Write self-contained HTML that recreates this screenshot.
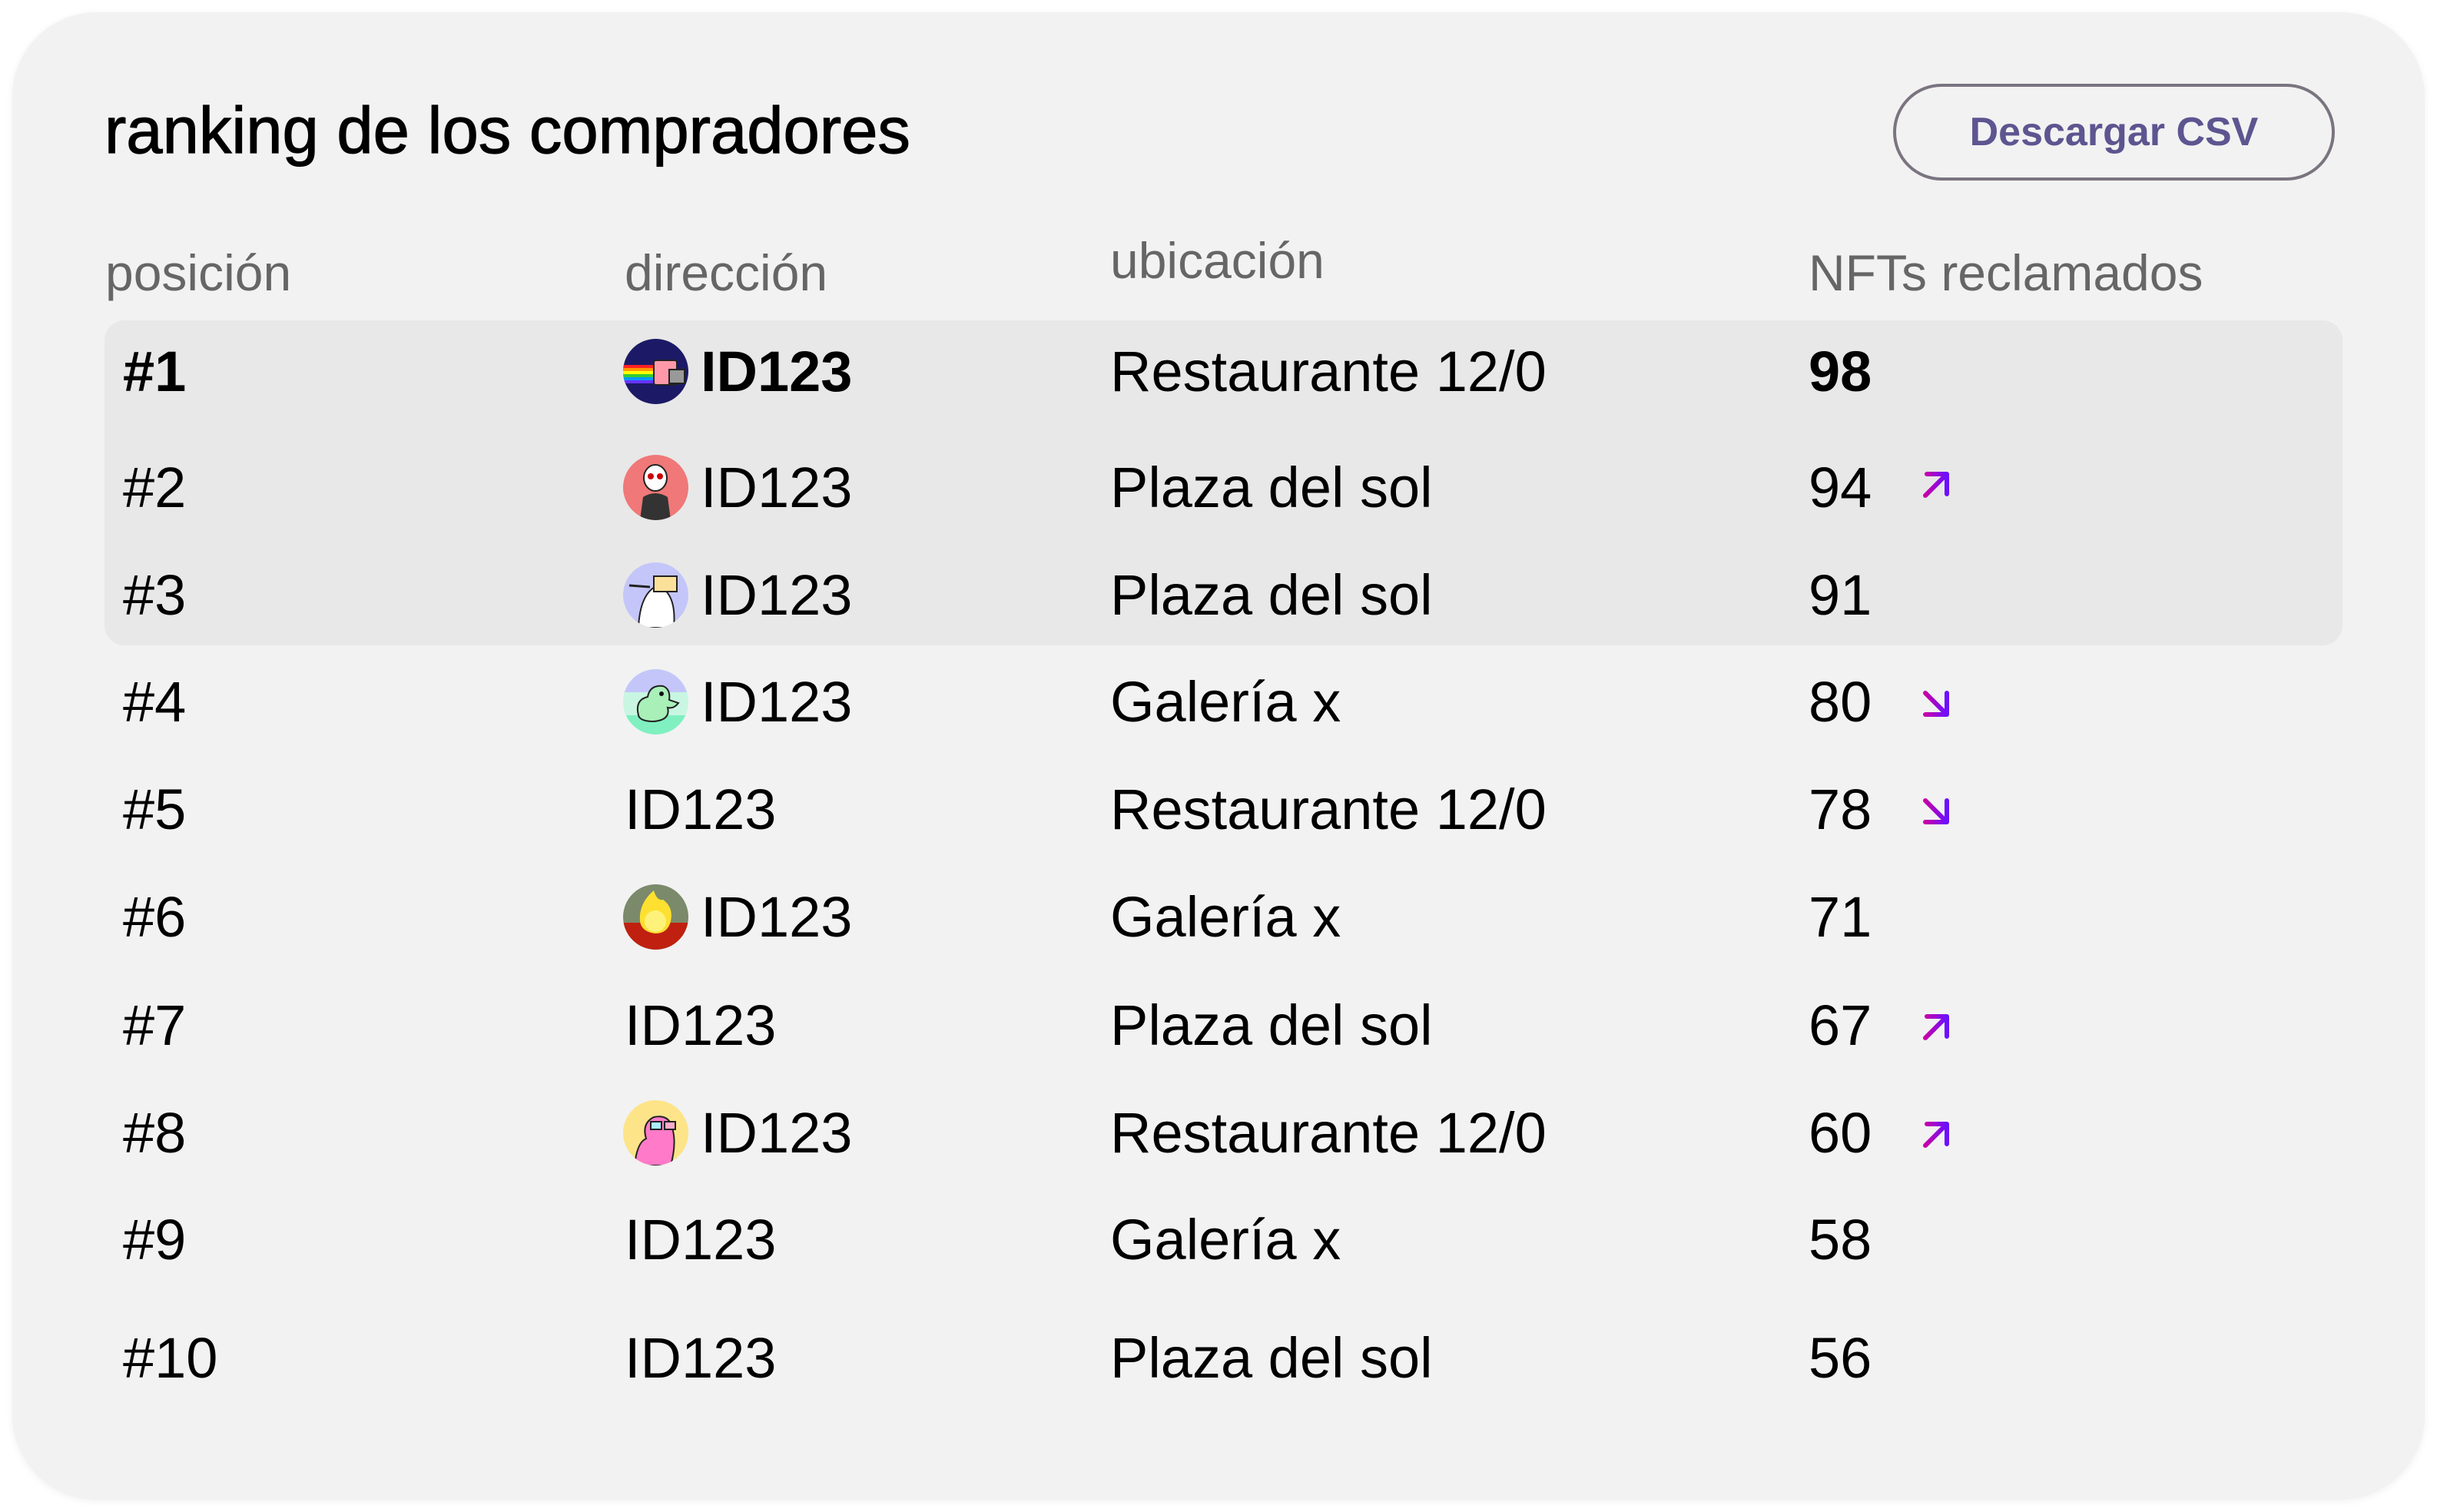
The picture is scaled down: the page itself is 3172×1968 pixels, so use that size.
<!DOCTYPE html>
<html><head><meta charset="utf-8"><style>
html,body{margin:0;padding:0;background:#fff;width:3172px;height:1968px;overflow:hidden}
body{position:relative;font-family:"Liberation Sans",sans-serif;color:#000}
.card{position:absolute;left:16px;top:16px;width:3140px;height:1936px;background:#f2f2f2;border-radius:110px;box-shadow:0 2px 10px rgba(0,0,0,0.06)}
.t{position:absolute;white-space:nowrap}
.title{left:136px;top:129px;font-size:85px;line-height:84px;-webkit-text-stroke:1.2px #000}
.btn{position:absolute;left:2464px;top:109px;width:567px;height:118px;border:4px solid #7a7480;border-radius:64px;box-sizing:content-box;display:flex;align-items:center;justify-content:center;color:#5d5590;font-size:52px;font-weight:bold}
.h{font-size:66px;line-height:67px;color:#666}
.hl{position:absolute;left:136px;top:417px;width:2913px;height:423px;background:#e8e8e8;border-radius:26px}
.r{font-size:74px;line-height:74px}
.b{font-weight:bold}
.av{position:absolute;width:85px;height:85px;border-radius:50%;overflow:hidden}
.ar{position:absolute;width:40px;height:40px}
</style></head><body>
<div class="card"></div>
<div class="t title">ranking de los compradores</div>
<div class="btn">Descargar CSV</div>
<div class="t h" style="left:137px;top:322px">posición</div>
<div class="t h" style="left:813px;top:322px">dirección</div>
<div class="t h" style="left:1445px;top:306px">ubicación</div>
<div class="t h" style="left:2354px;top:322px">NFTs reclamados</div>
<div class="hl"></div>

<svg width="0" height="0" style="position:absolute"><defs>
<linearGradient id="g" x1="0" y1="0" x2="1" y2="0"><stop offset="0" stop-color="#c800a8"/><stop offset="1" stop-color="#6a10ff"/></linearGradient>
</defs></svg>

<div class="t r b" style="left:160px;top:447px">#1</div>
<div class="t r b" style="left:912px;top:447px">ID123</div>
<div class="t r" style="left:1445px;top:447px">Restaurante 12/0</div>
<div class="t r b" style="left:2354px;top:447px">98</div>
<svg class="av" style="left:811px;top:441px" viewBox="0 0 85 85"><rect width="85" height="85" fill="#1c1a66"/><rect x="0" y="34" width="45" height="4" fill="#f22"/><rect x="0" y="38" width="45" height="4" fill="#f90"/><rect x="0" y="42" width="45" height="4" fill="#ff0"/><rect x="0" y="46" width="45" height="4" fill="#3c3"/><rect x="0" y="50" width="45" height="4" fill="#09f"/><rect x="0" y="54" width="45" height="4" fill="#63f"/><rect x="40" y="28" width="30" height="32" rx="3" fill="#f9a" stroke="#222" stroke-width="2"/><rect x="60" y="40" width="20" height="18" fill="#999" stroke="#222" stroke-width="2"/></svg>

<div class="t r" style="left:160px;top:598px">#2</div>
<div class="t r" style="left:912px;top:598px">ID123</div>
<div class="t r" style="left:1445px;top:598px">Plaza del sol</div>
<div class="t r" style="left:2354px;top:598px">94</div>
<svg class="av" style="left:811px;top:592px" viewBox="0 0 85 85"><rect width="85" height="85" fill="#f07878"/><ellipse cx="42" cy="30" rx="15" ry="17" fill="#fff" stroke="#222" stroke-width="2"/><circle cx="36" cy="28" r="4" fill="#c00"/><circle cx="48" cy="28" r="4" fill="#c00"/><path d="M22 85 L26 55 Q42 45 58 55 L62 85Z" fill="#333"/></svg>

<div class="t r" style="left:160px;top:738px">#3</div>
<div class="t r" style="left:912px;top:738px">ID123</div>
<div class="t r" style="left:1445px;top:738px">Plaza del sol</div>
<div class="t r" style="left:2354px;top:738px">91</div>
<svg class="av" style="left:811px;top:732px" viewBox="0 0 85 85"><rect width="85" height="85" fill="#c4c6fa"/><path d="M20 85 Q22 40 45 30 Q70 40 66 85Z" fill="#fff" stroke="#222" stroke-width="2"/><rect x="40" y="18" width="30" height="20" fill="#fbe09a" stroke="#222" stroke-width="2"/><path d="M8 30 L35 32" stroke="#222" stroke-width="3"/></svg>

<div class="t r" style="left:160px;top:877px">#4</div>
<div class="t r" style="left:912px;top:877px">ID123</div>
<div class="t r" style="left:1445px;top:877px">Galería x</div>
<div class="t r" style="left:2354px;top:877px">80</div>
<svg class="av" style="left:811px;top:871px" viewBox="0 0 85 85"><rect width="85" height="85" fill="#c8f6e2"/><rect width="85" height="30" fill="#c4c6fa"/><rect y="60" width="85" height="25" fill="#80f0c0"/><path d="M20 60 Q15 40 32 36 Q35 20 52 22 Q62 26 60 40 L72 44 Q66 52 58 50 Q62 66 40 68 Q22 68 20 60Z" fill="#a8f0b8" stroke="#222" stroke-width="2"/><circle cx="50" cy="32" r="3" fill="#111"/></svg>
<svg class="ar" style="left:2500px;top:896px" viewBox="0 0 40 40"><path d="M6 6 L34 34 M34 6 L34 34 L6 34" fill="none" stroke="url(#g)" stroke-width="6" stroke-linecap="round" stroke-linejoin="round"/></svg>

<div class="t r" style="left:160px;top:1017px">#5</div>
<div class="t r" style="left:813px;top:1017px">ID123</div>
<div class="t r" style="left:1445px;top:1017px">Restaurante 12/0</div>
<div class="t r" style="left:2354px;top:1017px">78</div>
<svg class="ar" style="left:2500px;top:1036px" viewBox="0 0 40 40"><path d="M6 6 L34 34 M34 6 L34 34 L6 34" fill="none" stroke="url(#g)" stroke-width="6" stroke-linecap="round" stroke-linejoin="round"/></svg>

<div class="t r" style="left:160px;top:1157px">#6</div>
<div class="t r" style="left:912px;top:1157px">ID123</div>
<div class="t r" style="left:1445px;top:1157px">Galería x</div>
<div class="t r" style="left:2354px;top:1157px">71</div>
<svg class="av" style="left:811px;top:1151px" viewBox="0 0 85 85"><rect width="85" height="85" fill="#7a8a6a"/><rect y="50" width="85" height="35" fill="#c02010"/><path d="M22 48 Q20 25 40 8 Q44 22 52 20 Q66 30 62 48 Q58 64 42 64 Q24 62 22 48Z" fill="#fde030"/><circle cx="42" cy="48" r="14" fill="#fff27a"/></svg>

<div class="t r" style="left:160px;top:1298px">#7</div>
<div class="t r" style="left:813px;top:1298px">ID123</div>
<div class="t r" style="left:1445px;top:1298px">Plaza del sol</div>
<div class="t r" style="left:2354px;top:1298px">67</div>
<svg class="ar" style="left:2500px;top:1317px" viewBox="0 0 40 40"><path d="M6 34 L34 6 M8 6 L34 6 L34 32" fill="none" stroke="url(#g)" stroke-width="6" stroke-linecap="round" stroke-linejoin="round"/></svg>

<div class="t r" style="left:160px;top:1438px">#8</div>
<div class="t r" style="left:912px;top:1438px">ID123</div>
<div class="t r" style="left:1445px;top:1438px">Restaurante 12/0</div>
<div class="t r" style="left:2354px;top:1438px">60</div>
<svg class="av" style="left:811px;top:1432px" viewBox="0 0 85 85"><rect width="85" height="85" fill="#fde488"/><path d="M15 85 Q18 55 30 50 Q24 30 40 22 Q60 18 64 36 Q70 56 62 85Z" fill="#ff7ac8" stroke="#222" stroke-width="2"/><rect x="36" y="28" width="14" height="10" fill="#aef" stroke="#222" stroke-width="2"/><rect x="54" y="28" width="14" height="10" fill="#fac" stroke="#222" stroke-width="2"/></svg>
<svg class="ar" style="left:2500px;top:1457px" viewBox="0 0 40 40"><path d="M6 34 L34 6 M8 6 L34 6 L34 32" fill="none" stroke="url(#g)" stroke-width="6" stroke-linecap="round" stroke-linejoin="round"/></svg>

<div class="t r" style="left:160px;top:1577px">#9</div>
<div class="t r" style="left:813px;top:1577px">ID123</div>
<div class="t r" style="left:1445px;top:1577px">Galería x</div>
<div class="t r" style="left:2354px;top:1577px">58</div>

<div class="t r" style="left:160px;top:1731px">#10</div>
<div class="t r" style="left:813px;top:1731px">ID123</div>
<div class="t r" style="left:1445px;top:1731px">Plaza del sol</div>
<div class="t r" style="left:2354px;top:1731px">56</div>

<svg class="ar" style="left:2500px;top:611px" viewBox="0 0 40 40"><path d="M6 34 L34 6 M8 6 L34 6 L34 32" fill="none" stroke="url(#g)" stroke-width="6" stroke-linecap="round" stroke-linejoin="round"/></svg>
</body></html>
